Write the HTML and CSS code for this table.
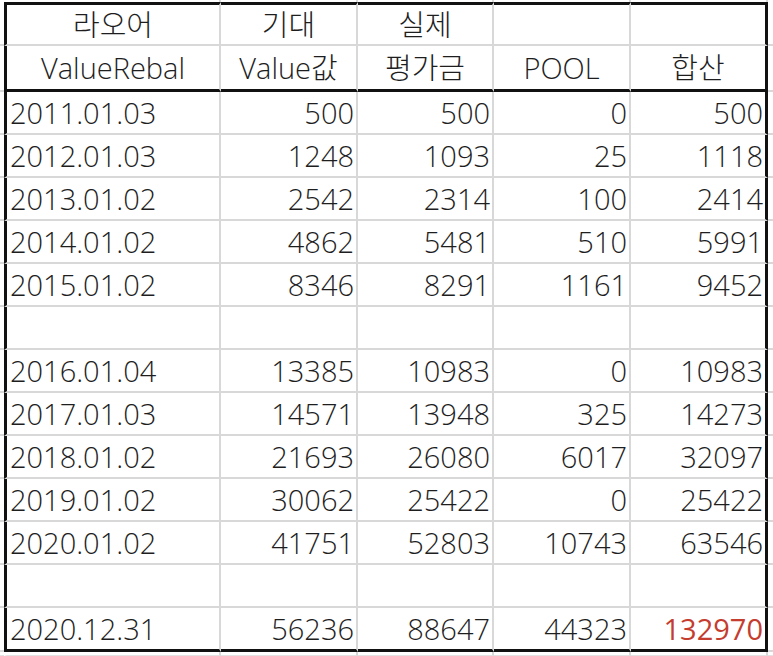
FILE: index.html
```html
<!DOCTYPE html>
<html lang="ko">
<head>
<meta charset="utf-8">
<title>ValueRebal</title>
<link rel="stylesheet" href="styles.css">
</head>
<body>
<div class="sheet">
  <div class="row edge-top">
    <div class="sl"></div><div class="c c1"></div><div class="c c2"></div><div class="c c3"></div><div class="c c4"></div><div class="c c5"></div><div class="sr"></div>
  </div>
  <div class="row hd hd1">
    <div class="sl"></div><div class="c c1">라오어</div><div class="c c2">기대</div><div class="c c3">실제</div><div class="c c4"></div><div class="c c5"></div><div class="sr"></div>
  </div>
  <div class="row hd hd2">
    <div class="sl"></div><div class="c c1">ValueRebal</div><div class="c c2">Value값</div><div class="c c3">평가금</div><div class="c c4">POOL</div><div class="c c5">합산</div><div class="sr"></div>
  </div>
  <div class="row first">
    <div class="sl"></div><div class="c c1">2011.01.03</div><div class="c c2 num">500</div><div class="c c3 num">500</div><div class="c c4 num">0</div><div class="c c5 num">500</div><div class="sr"></div>
  </div>
  <div class="row">
    <div class="sl"></div><div class="c c1">2012.01.03</div><div class="c c2 num">1248</div><div class="c c3 num">1093</div><div class="c c4 num">25</div><div class="c c5 num">1118</div><div class="sr"></div>
  </div>
  <div class="row">
    <div class="sl"></div><div class="c c1">2013.01.02</div><div class="c c2 num">2542</div><div class="c c3 num">2314</div><div class="c c4 num">100</div><div class="c c5 num">2414</div><div class="sr"></div>
  </div>
  <div class="row">
    <div class="sl"></div><div class="c c1">2014.01.02</div><div class="c c2 num">4862</div><div class="c c3 num">5481</div><div class="c c4 num">510</div><div class="c c5 num">5991</div><div class="sr"></div>
  </div>
  <div class="row">
    <div class="sl"></div><div class="c c1">2015.01.02</div><div class="c c2 num">8346</div><div class="c c3 num">8291</div><div class="c c4 num">1161</div><div class="c c5 num">9452</div><div class="sr"></div>
  </div>
  <div class="row">
    <div class="sl"></div><div class="c c1"></div><div class="c c2 num"></div><div class="c c3 num"></div><div class="c c4 num"></div><div class="c c5 num"></div><div class="sr"></div>
  </div>
  <div class="row">
    <div class="sl"></div><div class="c c1">2016.01.04</div><div class="c c2 num">13385</div><div class="c c3 num">10983</div><div class="c c4 num">0</div><div class="c c5 num">10983</div><div class="sr"></div>
  </div>
  <div class="row">
    <div class="sl"></div><div class="c c1">2017.01.03</div><div class="c c2 num">14571</div><div class="c c3 num">13948</div><div class="c c4 num">325</div><div class="c c5 num">14273</div><div class="sr"></div>
  </div>
  <div class="row">
    <div class="sl"></div><div class="c c1">2018.01.02</div><div class="c c2 num">21693</div><div class="c c3 num">26080</div><div class="c c4 num">6017</div><div class="c c5 num">32097</div><div class="sr"></div>
  </div>
  <div class="row">
    <div class="sl"></div><div class="c c1">2019.01.02</div><div class="c c2 num">30062</div><div class="c c3 num">25422</div><div class="c c4 num">0</div><div class="c c5 num">25422</div><div class="sr"></div>
  </div>
  <div class="row">
    <div class="sl"></div><div class="c c1">2020.01.02</div><div class="c c2 num">41751</div><div class="c c3 num">52803</div><div class="c c4 num">10743</div><div class="c c5 num">63546</div><div class="sr"></div>
  </div>
  <div class="row">
    <div class="sl"></div><div class="c c1"></div><div class="c c2 num"></div><div class="c c3 num"></div><div class="c c4 num"></div><div class="c c5 num"></div><div class="sr"></div>
  </div>
  <div class="row last">
    <div class="sl"></div><div class="c c1">2020.12.31</div><div class="c c2 num">56236</div><div class="c c3 num">88647</div><div class="c c4 num">44323</div><div class="c c5 num total">132970</div><div class="sr"></div>
  </div>
  <div class="row edge-bottom">
    <div class="sl"></div><div class="c c1"></div><div class="c c2"></div><div class="c c3"></div><div class="c c4"></div><div class="c c5"></div><div class="sr"></div>
  </div>
</div>
</body>
</html>
```
FILE: styles.css
```css
html, body {
  margin: 0;
  padding: 0;
  background: #ffffff;
}

body {
  font-family: "Open Sans", "Noto Sans CJK KR", sans-serif;
  font-weight: 300;
  font-size: 29px;
  line-height: 1;
  color: #1e1e1e;
}

.sheet {
  width: 773px;
  overflow: hidden;
}

.row {
  display: flex;
  height: 43px;
}

.row > div {
  box-sizing: border-box;
  border-bottom: 2px solid #d8d8d8;
  display: flex;
  align-items: center;
  white-space: nowrap;
}

.sl {
  width: 4px;
  flex: none;
}

.sr {
  flex: 1;
}

.c {
  flex: none;
  border-right: 2px solid #d8d8d8;
}

.c1 {
  width: 217px;
  border-left: 3px solid #111;
  padding-left: 3px;
}

.c2 { width: 137px; }
.c3 { width: 136px; }
.c4 { width: 137px; }

.c5 {
  width: 137px;
  border-right: 3px solid #111 !important;
}

.num {
  justify-content: flex-end;
  padding-right: 2px;
}

.hd .c {
  justify-content: center;
  padding-left: 0;
}

.edge-top {
  height: 2px;
}

.edge-top > div {
  border-bottom: none;
}

.edge-top .c1 {
  border-left-color: #fff;
}

.edge-top .c5 {
  border-right: 2px solid #d8d8d8 !important;
}

.hd1 {
  height: 44px;
}

.hd1 .c {
  border-top: 3px solid #111;
}

.hd2 {
  height: 46px;
}

.hd2 .c {
  border-bottom: 3px solid #111;
}

.last {
  height: 44px;
}

.last .c {
  border-bottom: 3px solid #111;
}

.total {
  color: #c43d2e;
  font-weight: 400;
}

.edge-bottom {
  height: 4px;
}

.edge-bottom > div {
  border-bottom: 1px solid #e2e2e2;
}

.edge-bottom .c1 {
  border-left-color: #fff;
}

.edge-bottom .c5 {
  border-right: 2px solid #d8d8d8 !important;
}
```
